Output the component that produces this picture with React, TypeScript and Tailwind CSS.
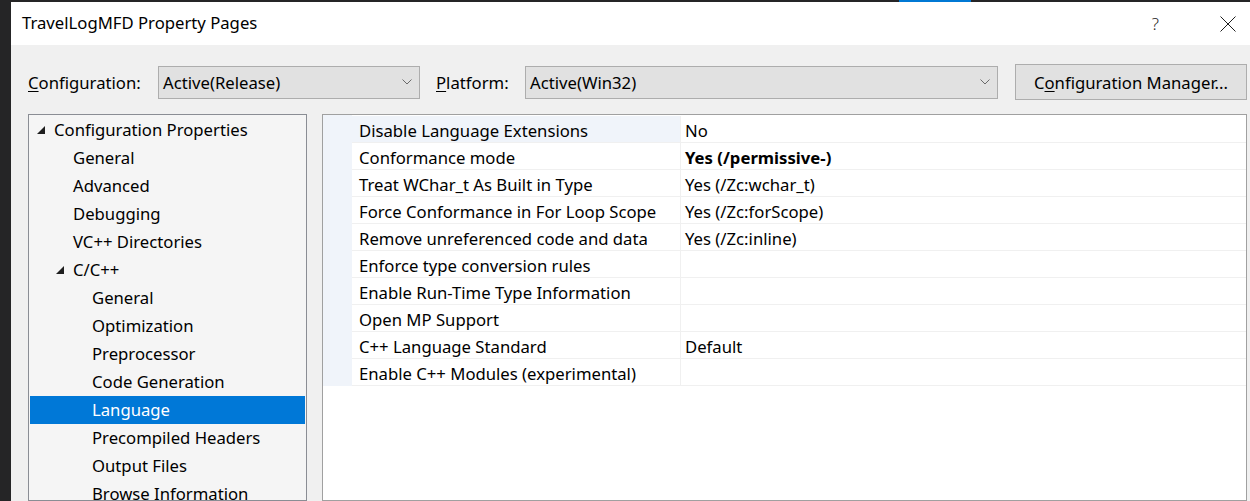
import React from "react";

const treeItems: { label: string; level: number; expander?: boolean; selected?: boolean }[] = [
  { label: "Configuration Properties", level: 0, expander: true },
  { label: "General", level: 1 },
  { label: "Advanced", level: 1 },
  { label: "Debugging", level: 1 },
  { label: "VC++ Directories", level: 1 },
  { label: "C/C++", level: 1, expander: true },
  { label: "General", level: 2 },
  { label: "Optimization", level: 2 },
  { label: "Preprocessor", level: 2 },
  { label: "Code Generation", level: 2 },
  { label: "Language", level: 2, selected: true },
  { label: "Precompiled Headers", level: 2 },
  { label: "Output Files", level: 2 },
  { label: "Browse Information", level: 2 },
];

const properties: { name: string; value: string; bold?: boolean }[] = [
  { name: "Disable Language Extensions", value: "No" },
  { name: "Conformance mode", value: "Yes (/permissive-)", bold: true },
  { name: "Treat WChar_t As Built in Type", value: "Yes (/Zc:wchar_t)" },
  { name: "Force Conformance in For Loop Scope", value: "Yes (/Zc:forScope)" },
  { name: "Remove unreferenced code and data", value: "Yes (/Zc:inline)" },
  { name: "Enforce type conversion rules", value: "" },
  { name: "Enable Run-Time Type Information", value: "" },
  { name: "Open MP Support", value: "" },
  { name: "C++ Language Standard", value: "Default" },
  { name: "Enable C++ Modules (experimental)", value: "" },
];

const Chevron = () => (
  <svg width="10" height="6" viewBox="0 0 10 6" className="shrink-0">
    <path d="M0.5 0.5 L5 5 L9.5 0.5" fill="none" stroke="#6a6a6a" strokeWidth="1" />
  </svg>
);

const Expander = () => (
  <svg width="8" height="8" viewBox="0 0 8 8">
    <polygon points="8,0 8,8 0,8" fill="#1e1e1e" />
  </svg>
);

const Dropdown = ({ value, width }: { value: string; width: string }) => (
  <div
    className={`${width} h-[33px] shrink-0 flex items-center justify-between pl-[4px] pr-[7px] bg-[#e1e1e1] border border-[#adadad]`}
  >
    <span className="pt-[1px]">{value}</span>
    <Chevron />
  </div>
);

const App = () => {
  return (
    <div
      className="w-[1250px] h-[501px] flex overflow-hidden bg-[#252526] text-[16.7px] text-black"
      style={{ fontFamily: '"Noto Sans", "Open Sans", sans-serif' }}
    >
      {/* dark strip on the left */}
      <div className="w-[11px] shrink-0" />

      <div className="flex-1 flex flex-col min-w-0">
        {/* top strip */}
        <div className="h-[2px] shrink-0 flex">
          <div className="ml-[888px] w-[72px] bg-[#0078d4]" />
        </div>

        {/* Title bar */}
        <div className="h-[43px] shrink-0 bg-white flex items-center pl-[11px] pr-[14px]">
          <span className="text-[16.7px] leading-none">TravelLogMFD Property Pages</span>
          <div className="ml-auto flex items-center">
            <span className="text-[17px] leading-none text-[#1e1e1e] font-light">?</span>
            <svg width="16" height="16" viewBox="0 0 16 16" className="ml-[61px]">
              <path d="M0.5 0.5 L15.5 15.5 M15.5 0.5 L0.5 15.5" stroke="#1e1e1e" strokeWidth="1" />
            </svg>
          </div>
        </div>

        {/* Body */}
        <div className="flex-1 bg-[#f0f0f0] flex flex-col pl-[17px] pr-[3px] pt-[19px] min-h-0">
          <div className="flex items-center h-[36px] shrink-0">
            <span className="w-[130px] shrink-0 pt-[1px]">
              <u className="underline-offset-2">C</u>onfiguration:
            </span>
            <Dropdown value="Active(Release)" width="w-[262px]" />
            <span className="ml-[16px] w-[89px] shrink-0 pt-[1px]">
              <u className="underline-offset-2">P</u>latform:
            </span>
            <Dropdown value="Active(Win32)" width="w-[473px]" />
            <button className="ml-[17px] w-[232px] h-[36px] bg-[#e1e1e1] border border-[#adadad] flex items-center justify-center pt-[1px]">
              C<u className="underline-offset-2">o</u>nfiguration Manager...
            </button>
          </div>

          <div className="flex gap-[15px] mt-[14px] flex-1 min-h-0">
            {/* Tree */}
            <div className="w-[279px] shrink-0 border border-[#8a8d94] bg-[#f5f5f5] p-[1px] overflow-hidden">
              {treeItems.map((item, i) => (
                <div
                  key={i}
                  className={`h-[28px] flex items-center ${item.selected ? "bg-[#0078d7] text-white" : ""}`}
                >
                  <div
                    className={`flex items-center shrink-0 ${
                      item.level === 0 ? "w-[24px] pl-[7px]" : item.level === 1 ? "w-[43px] pl-[26px]" : "w-[62px]"
                    }`}
                  >
                    {item.expander && <Expander />}
                  </div>
                  <span className="whitespace-nowrap">{item.label}</span>
                </div>
              ))}
            </div>

            {/* Property grid */}
            <div className="flex-1 border border-[#a0a0a0] bg-white overflow-hidden">
              <div className="h-[1px] w-[29px] bg-[#f0f4fa]" />
              {properties.map((p, i) => (
                <div key={i} className="h-[27px] flex">
                  <div className="w-[29px] shrink-0 bg-[#f0f4fa]" />
                  <div
                    className={`w-[328px] shrink-0 pl-[7px] pt-[3px] flex items-center border-b border-[#f0f0f0] whitespace-nowrap ${
                      i === 0 ? "bg-[#f0f4fa]" : ""
                    }`}
                  >
                    {p.name}
                  </div>
                  <div
                    className={`flex-1 pl-[4px] pt-[3px] flex items-center border-l border-b border-[#f0f0f0] ${
                      p.bold ? "font-bold" : ""
                    }`}
                  >
                    {p.value}
                  </div>
                </div>
              ))}
            </div>
          </div>
        </div>
      </div>
    </div>
  );
};

export default App;
